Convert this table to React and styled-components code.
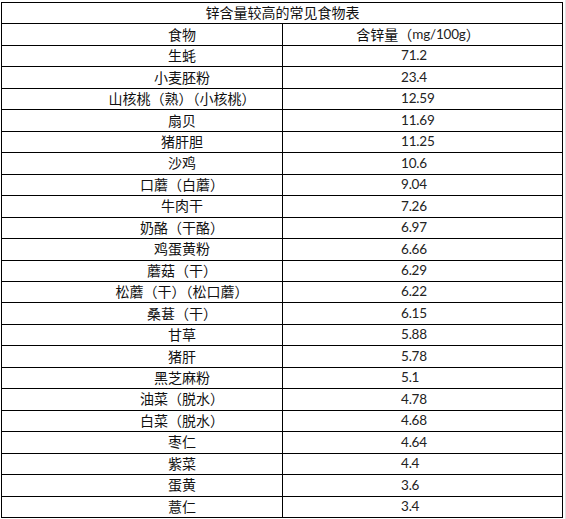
import React from "react";
import styled, { createGlobalStyle } from "styled-components";

const GlobalStyle = createGlobalStyle`
  body {
    margin: 0;
    background: #fff;
  }
`;

const Page = styled.div`
  width: 566px;
  height: 519px;
  padding: 2px 0 0 1px;
  box-sizing: border-box;
  background: #fff;
  border-right: 1px solid #e2e2e2;
`;

const Table = styled.div`
  display: grid;
  grid-template-columns: 281px 280px;
  grid-template-rows: repeat(24, 1fr);
  width: 562px;
  height: 516px;
  box-sizing: border-box;
  border-top: 1px solid #000;
  border-left: 1px solid #000;
  font-family: Lato, "Noto Sans CJK SC", sans-serif;
  font-size: 14px;
  color: #111;
`;

const Cell = styled.div`
  display: flex;
  align-items: center;
  justify-content: ${(p) => (p.$left ? "flex-start" : "center")};
  padding-left: ${(p) => p.$pl || 0}px;
  padding-right: ${(p) => p.$pr || 0}px;
  border-right: 1px solid #000;
  border-bottom: 1px solid #000;
  white-space: nowrap;
  line-height: 1;
`;

const Title = styled(Cell)`
  grid-column: 1 / span 2;
  padding-left: 1px;
`;

const Num = styled.span`
  font-size: 13.5px;
  color: #222;
  letter-spacing: -0.2px;
`;

const rows = [
  ["生蚝", "71.2"],
  ["小麦胚粉", "23.4"],
  ["山核桃（熟）（小核桃）", "12.59"],
  ["扇贝", "11.69"],
  ["猪肝胆", "11.25"],
  ["沙鸡", "10.6"],
  ["口蘑（白蘑）", "9.04"],
  ["牛肉干", "7.26"],
  ["奶酪（干酪）", "6.97"],
  ["鸡蛋黄粉", "6.66"],
  ["蘑菇（干）", "6.29"],
  ["松蘑（干）（松口蘑）", "6.22"],
  ["桑葚（干）", "6.15"],
  ["甘草", "5.88"],
  ["猪肝", "5.78"],
  ["黑芝麻粉", "5.1"],
  ["油菜（脱水）", "4.78"],
  ["白菜（脱水）", "4.68"],
  ["枣仁", "4.64"],
  ["紫菜", "4.4"],
  ["蛋黄", "3.6"],
  ["薏仁", "3.4"],
];

export default function App() {
  return (
    <>
      <GlobalStyle />
      <Page>
        <Table>
          <Title>锌含量较高的常见食物表</Title>
          <Cell $pl={80}>食物</Cell>
          <Cell $pr={9}>
            含锌量（<Num>mg/100g</Num>）
          </Cell>
          {rows.map(([food, zinc]) => (
            <React.Fragment key={food}>
              <Cell $pl={80}>{food}</Cell>
              <Cell $left $pl={118}>
                <Num>{zinc}</Num>
              </Cell>
            </React.Fragment>
          ))}
        </Table>
      </Page>
    </>
  );
}
